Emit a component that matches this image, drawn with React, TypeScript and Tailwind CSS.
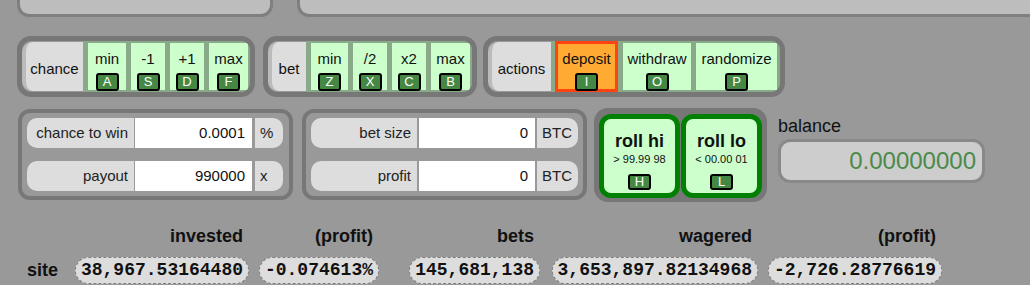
import React from 'react';

// small dark key-cap shown under each control
function Key({ k, h = 'h-[18px]' }: { k: string; h?: string }) {
  return (
    <span className={`inline-flex w-[23px] items-center justify-center rounded-[3px] border-2 border-black bg-[#448844] text-[13px] leading-none text-white ${h}`}>
      {k}
    </span>
  );
}

function Cell({ label, k, w, hot }: { label: string; k: string; w: string; hot?: boolean }) {
  return (
    <div
      className={`flex flex-col items-center ${w} ${
        hot ? '-my-[2px] border-[3px] border-[#ff4411] bg-[#ffaa33] pt-[6px]' : 'bg-[#ccffcc] pt-[7px]'
      }`}
    >
      <span className="text-[15px] leading-[17px] text-[#111]">{label}</span>
      <span className="mt-[2px]">
        <Key k={k} />
      </span>
    </div>
  );
}

function Group({
  title,
  titleW,
  w,
  zone,
  children,
}: {
  title: string;
  titleW: string;
  w: string;
  zone: string;
  children: React.ReactNode;
}) {
  return (
    <div className={`flex h-[61px] overflow-hidden rounded-[14px] border-[5px] border-[#777] ${w}`}>
      <div
        className={`my-[1px] flex items-center justify-center rounded-l-[10px] border-l-[4px] border-[#bbb] bg-[#ddd] pt-[5px] text-[15px] text-[#111] ${titleW}`}
      >
        {title}
      </div>
      <div className={`flex flex-1 bg-[#88aa88] py-[2px] ${zone}`}>{children}</div>
    </div>
  );
}

function Field({
  label,
  value,
  unit,
  lw,
  iw,
  uw,
  gap,
}: {
  label: string;
  value: string;
  unit: string;
  lw: string;
  iw: string;
  uw: string;
  gap: string;
}) {
  return (
    <div className={`flex h-[30px] text-[15px] text-[#222] ${gap}`}>
      <div className={`flex items-center justify-end rounded-l-[10px] bg-[#ddd] pr-[6px] ${lw}`}>{label}</div>
      <div className={`flex items-center justify-end bg-white pr-[7px] text-[#111] ${iw}`}>{value}</div>
      <div className={`flex items-center rounded-r-[10px] bg-[#ddd] pl-[5px] ${uw}`}>{unit}</div>
    </div>
  );
}

function RollButton({ title, sub, k }: { title: string; sub: string; k: string }) {
  return (
    <div className="flex h-[84px] w-[81px] flex-col items-center rounded-[12px] border-[5px] border-[#008000] bg-[#ccffcc] pt-[12px] text-[#111]">
      <span className="text-[18px] font-bold leading-[21px]">{title}</span>
      <span className="mt-[1px] text-[11px] leading-[13px]">{sub}</span>
      <span className="mt-[3px]">
        <Key k={k} h="h-[16px]" />
      </span>
    </div>
  );
}

function Pill({ v }: { v: string }) {
  return (
    <span className="inline-flex h-[27px] items-center rounded-full border border-dashed border-[#808080] bg-[#dddddd] px-[5px] font-['Liberation_Mono',monospace] text-[18px] font-bold leading-[25px] text-[#111]">
      {v}
    </span>
  );
}

const cols = ['w-[179px]', 'w-[130px]', 'w-[161px]', 'w-[218px]', 'w-[184px]'];
const heads = ['invested', '(profit)', 'bets', 'wagered', '(profit)'];
const site = ['38,967.53164480', '-0.074613%', '145,681,138', '3,653,897.82134968', '-2,726.28776619'];

export default function App() {
  return (
    <div className="h-[285px] w-[1030px] overflow-hidden bg-[#999999] font-['Liberation_Sans',Arial,sans-serif]">
      {/* cut-off panels at the top */}
      <div className="flex h-[17px]">
        <div className="ml-[17px] w-[256px] rounded-b-[12px] border-[3px] border-t-0 border-[#7f7f7f] bg-[#bdbdbd]" />
        <div className="ml-[24px] -mr-[20px] flex-1 rounded-b-[12px] border-[3px] border-t-0 border-[#7f7f7f] bg-[#bdbdbd]" />
      </div>

      {/* button groups */}
      <div className="ml-[17px] mt-[19px] flex">
        <Group title="chance" titleW="w-[61px]" w="w-[238px]" zone="gap-[5px] pl-[5px] pr-[2px]">
          <Cell label="min" k="A" w="w-[38px]" />
          <Cell label="-1" k="S" w="w-[34px]" />
          <Cell label="+1" k="D" w="w-[34px]" />
          <Cell label="max" k="F" w="w-[39px]" />
        </Group>
        <div className="ml-[8px]">
          <Group title="bet" titleW="w-[38px]" w="w-[214px]" zone="gap-[5px] pl-[5px] pr-[2px]">
            <Cell label="min" k="Z" w="w-[37px]" />
            <Cell label="/2" k="X" w="w-[34px]" />
            <Cell label="x2" k="C" w="w-[34px]" />
            <Cell label="max" k="B" w="w-[39px]" />
          </Group>
        </div>
        <div className="ml-[6px]">
          <Group title="actions" titleW="w-[63px]" w="w-[302px]" zone="gap-[5px] pl-[4px] pr-[3px]">
            <Cell label="deposit" k="I" w="w-[63px]" hot />
            <Cell label="withdraw" k="O" w="w-[68px]" />
            <Cell label="randomize" k="P" w="w-[81px]" />
          </Group>
        </div>
      </div>

      {/* inputs, roll buttons, balance */}
      <div className="ml-[18px] mt-[11px] flex items-start">
        <div className="mt-[1px] flex w-[275px] flex-col gap-[13px] rounded-[12px] border-[4px] border-[#777] p-[5px] pr-[6px]">
          <Field label="chance to win" value="0.0001" unit="%" lw="w-[107px]" iw="w-[117px]" uw="w-[28px]" gap="gap-x-[1px] [&>*:last-child]:ml-[2px]" />
          <Field label="payout" value="990000" unit="x" lw="w-[107px]" iw="w-[117px]" uw="w-[28px]" gap="gap-x-[1px] [&>*:last-child]:ml-[2px]" />
        </div>
        <div className="ml-[9px] mt-[1px] flex w-[285px] flex-col gap-[13px] rounded-[12px] border-[4px] border-[#777] p-[5px]">
          <Field label="bet size" value="0" unit="BTC" lw="w-[106px]" iw="w-[116px]" uw="w-[41px]" gap="gap-x-[2px]" />
          <Field label="profit" value="0" unit="BTC" lw="w-[106px]" iw="w-[116px]" uw="w-[41px]" gap="gap-x-[2px]" />
        </div>
        <div className="ml-[7px] flex h-[94px] w-[173px] gap-[1px] rounded-[14px] bg-[#777] pb-[4px] pl-[5px] pr-[5px] pt-[6px]">
          <RollButton title="roll hi" sub="> 99.99 98" k="H" />
          <RollButton title="roll lo" sub="< 00.00 01" k="L" />
        </div>
        <div className="ml-[11px] flex flex-col pt-[8px]">
          <span className="text-[18px] leading-[21px] text-[#111]">balance</span>
          <div className="mt-[2px] flex h-[44px] w-[207px] items-center justify-end rounded-[12px] border-[3px] border-[#888] bg-[#cdcdcd] pr-[6px] text-[24px] text-[#4a8a4a]">
            0.00000000
          </div>
        </div>
      </div>

      {/* stats table */}
      <div className="mt-[24px] flex">
        <div className="w-[70px]" />
        {heads.map((h, i) => (
          <div key={i} className={`pr-[6px] text-right text-[18px] font-bold leading-[21px] text-[#111] ${cols[i]}`}>
            {h}
          </div>
        ))}
      </div>
      <div className="mt-[10px] flex">
        <div className="flex h-[27px] w-[70px] items-center justify-end pr-[12px] text-[18px] font-bold leading-[21px] text-[#111]">
          site
        </div>
        {site.map((v, i) => (
          <div key={i} className={`flex justify-end ${cols[i]}`}>
            <Pill v={v} />
          </div>
        ))}
      </div>
    </div>
  );
}
